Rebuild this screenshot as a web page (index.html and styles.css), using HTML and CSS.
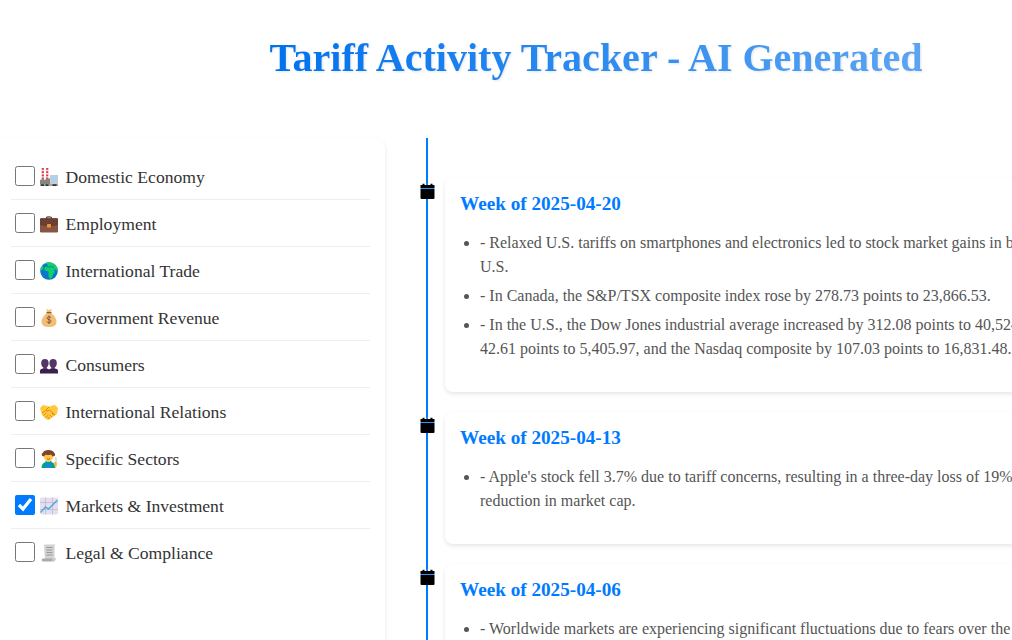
FILE: index.html
```html
<!DOCTYPE html>
<html lang="en">
<head>
<meta charset="utf-8">
<title>Tariff Activity Tracker</title>
<link rel="stylesheet" href="styles.css">
</head>
<body>
<div class="viewport">
<div class="page">
  <header class="header"><h1 class="title">Tariff Activity Tracker - AI Generated</h1></header>
  <main class="columns">
    <aside class="sidebar">
      <label class="row"><input class="check" type="checkbox">
        <svg class="icon" viewBox="0 0 18 18"><path d="M2.800 0v11M7.200 0v11" stroke="#f3dede" stroke-width="2.200"/><path d="M2.800 0v11M7.200 0v11" stroke="#e5394b" stroke-width="2.200" stroke-dasharray="1.800 1.400"/><path d="M10 7h8v11h-8z" fill="#c5ccd3"/><path d="M11.500 8h5v5h-5z" fill="#a9d3f3"/><path d="M0 12l4-1.500V12l4-1.500h2V18H0z" fill="#858585"/><path d="M0 16h18v2H0z" fill="#a5a5a5"/><path d="M1 16.300h3v1.700H1zm4.500 0h3v1.700h-3zm7 0h4v1.700h-4z" fill="#333"/></svg>
        <span>Domestic Economy</span></label>
      <label class="row"><input class="check" type="checkbox">
        <svg class="icon" viewBox="0 0 18 18"><path d="M6.500 4V2.800q0-1 2.500-1t2.500 1V4" fill="none" stroke="#5b3a33" stroke-width="1.200"/><rect y="3.300" width="18" height="14.200" rx="1.300" fill="#8a5442"/><path d="M0 4.500q0-1.200 1.200-1.200h15.600q1.200 0 1.200 1.200V10q-9 2.500-18 0z" fill="#6a4033"/><rect x="7" y="9" width="4" height="3.500" rx="1" fill="#eb963c"/></svg>
        <span>Employment</span></label>
      <label class="row"><input class="check" type="checkbox">
        <svg class="icon" viewBox="0 0 18 18"><circle cx="9" cy="9" r="8.800" fill="#0878c8"/><path d="M4 1.700Q7-.4 11 .5q4.500 1.200 6.300 5.500l-.8 3-1.500-2-1 1 1 2-2 2-1 3.500-2 1.500-1.500-2.500V9.500L6 9 4 7.500 5 5l3-1.500-1-1.500zM.7 6L3 3.500 3.500 6 1.500 9z" fill="#13cf68"/><path d="M6 4.500l3 .5 3-.5 2 1.500" fill="none" stroke="#0878c8" stroke-width=".9"/></svg>
        <span>International Trade</span></label>
      <label class="row"><input class="check" type="checkbox">
        <svg class="icon" viewBox="0 0 18 18"><path d="M6 0l3 1 3-1-1.500 4h-3z" fill="#f7c477"/><path d="M7 4h4q5.500 4 5.500 9 0 5-7.500 5t-7.500-5Q1.500 8 7 4z" fill="#f3bd76"/><path d="M6.500 3.600h5" stroke="#8b5d39" stroke-width="1.300"/><path d="M11 9q-.5-1.300-2.200-1.200-1.800.1-1.700 1.500.1 1.100 2 1.400 2 .3 1.900 1.700-.1 1.300-2 1.300-1.700 0-2.200-1.300M9 6.500V15" fill="none" stroke="#70492e" stroke-width=".8"/></svg>
        <span>Government Revenue</span></label>
      <label class="row"><input class="check" type="checkbox">
        <svg class="icon" viewBox="0 0 18 18"><path d="M0 17.500v-2.500q0-2.200 3.500-2.600V10.500h3v1.900q1.500.2 2.500 1 1-.8 2.500-1v-1.900h3v1.900q3.500.4 3.500 2.600v2.500z" fill="#3b204b"/><ellipse cx="4.900" cy="7.200" rx="3.700" ry="4.200" fill="#533566"/><ellipse cx="13.100" cy="7.200" rx="3.700" ry="4.200" fill="#533566"/><path d="M3.500 10h3v3h-3zM11.500 10h3v3h-3z" fill="#533566"/></svg>
        <span>Consumers</span></label>
      <label class="row"><input class="check" type="checkbox">
        <svg class="icon" viewBox="0 0 18 18"><path d="M0 5l3-3 6 1.500L15 2l3 3-1 6-3 2-5 4-3-1-4-4z" fill="#ffc83d"/><path d="M9 4L5.500 7.500Q7 9 9.500 7L15 12M2 10l3-2M3.500 12.500L6.500 10M5.500 14.500L8.500 12M7.500 16l2.500-2M10 12l2 2M12 10l2 2.500" fill="none" stroke="#d67d00" stroke-width=".8"/></svg>
        <span>International Relations</span></label>
      <label class="row"><input class="check" type="checkbox">
        <svg class="icon" viewBox="0 0 18 18"><path d="M1.500 18q0-6.500 7-6.500t7 6.500z" fill="#00a86b"/><circle cx="8.500" cy="6.800" r="4.500" fill="#ffc83d"/><path d="M2.300 6Q.8 4.300 3 2.500 4 0 8.500 0t5.500 2.500Q16 4.300 14.700 6l-2 .5-1.700-2q-3 1-5.500 0L4 6.500z" fill="#7b4530"/><path d="M5.500 11h1.200v2.500h3.600V11h1.200v3l1.500 4H4l1.500-4z" fill="#168cd8"/><path d="M7 8.700q1.500 1 3 0" fill="none" stroke="#a95216" stroke-width=".8"/><path d="M15.800 7v5" stroke="#dcdce2" stroke-width="2"/><path d="M15.500 12v4.500" stroke="#f5b335" stroke-width="2.500"/></svg>
        <span>Specific Sectors</span></label>
      <label class="row"><input class="check" type="checkbox" checked>
        <svg class="icon" viewBox="0 0 18 18"><rect y=".5" width="18" height="17" rx="1.700" fill="#e5dfed"/><path d="M0 5.500h18M0 12.500h18M5.500.5v17M12.500.5v17" stroke="#c2b9cc" stroke-width=".8"/><path d="M.5 15.500L5.500 10l3 2L17.500 3" fill="none" stroke="#48a9e8" stroke-width="1.400"/></svg>
        <span>Markets &amp; Investment</span></label>
      <label class="row"><input class="check" type="checkbox">
        <svg class="icon" viewBox="0 0 18 18"><path d="M4 1.500q0-1 1.500-1h10L14.500 2v14H5z" fill="#d2d2d2"/><path d="M6.500 3.500h6M6.500 6h6M6.500 8.500h6M6.500 11h6" stroke="#999" stroke-width="1.100"/><path d="M2.500 14.500h10v3h-10q-1.800-1.500 0-3z" fill="#aaa"/><path d="M12.500 17q2.500 0 2.500-3" fill="none" stroke="#c5c5c5" stroke-width="1.500"/></svg>
        <span>Legal &amp; Compliance</span></label>
    </aside>
    <section class="timeline">
      <article class="card">
        <svg class="marker" viewBox="0 0 15 16"><path d="M.5 2h2V.8h2V2h6V.8h2V2h2v3H.5z"/><path d="M.5 6h14v9q0 1-1 1h-12q-1 0-1-1z"/><path class="seam" d="M.5 5.500h14M7 0v2"/></svg>
        <h2 class="week">Week of 2025-04-20</h2>
        <ul class="notes">
          <li>- Relaxed U.S. tariffs on smartphones and electronics led to stock market gains in both<br>U.S.</li>
          <li>- In Canada, the S&amp;P/TSX composite index rose by 278.73 points to 23,866.53.</li>
          <li>- In the U.S., the Dow Jones industrial average increased by 312.08 points to 40,524<br>42.61 points to 5,405.97, and the Nasdaq composite by 107.03 points to 16,831.48.</li>
        </ul>
      </article>
      <article class="card">
        <svg class="marker" viewBox="0 0 15 16"><path d="M.5 2h2V.8h2V2h6V.8h2V2h2v3H.5z"/><path d="M.5 6h14v9q0 1-1 1h-12q-1 0-1-1z"/><path class="seam" d="M.5 5.500h14M7 0v2"/></svg>
        <h2 class="week">Week of 2025-04-13</h2>
        <ul class="notes">
          <li>- Apple's stock fell 3.7% due to tariff concerns, resulting in a three-day loss of 19%<br>reduction in market cap.</li>
        </ul>
      </article>
      <article class="card">
        <svg class="marker" viewBox="0 0 15 16"><path d="M.5 2h2V.8h2V2h6V.8h2V2h2v3H.5z"/><path d="M.5 6h14v9q0 1-1 1h-12q-1 0-1-1z"/><path class="seam" d="M.5 5.500h14M7 0v2"/></svg>
        <h2 class="week">Week of 2025-04-06</h2>
        <ul class="notes">
          <li>- Worldwide markets are experiencing significant fluctuations due to fears over the</li>
        </ul>
      </article>
    </section>
  </main>
</div>
</div>
</body>
</html>
```
FILE: styles.css
```css
* { box-sizing: border-box; }
body { margin: 0; background: #fff; color: #333; font-family: "Liberation Serif", "Times New Roman", serif; }
.viewport { width: 100%; height: 640px; overflow: hidden; }
.page { width: 1192px; height: 640px; }
.header { height: 138px; padding-top: 35px; text-align: center; }
.title { display: inline-block; margin: 0; font-size: 40px; line-height: 46px; white-space: nowrap; color: transparent; background: linear-gradient(90deg, #0072ef, #5ba4f2); background-clip: text; -webkit-background-clip: text; filter: drop-shadow(1px 1px 1px rgba(0, 0, 0, .1)); }
.columns { display: flex; gap: 41px; height: 502px; }
.sidebar { flex: none; width: 385px; padding: 15px 15px 15px 11px; border-radius: 0 10px 0 0; box-shadow: 0 2px 4px rgba(0, 0, 0, .1); }
.row { display: flex; align-items: center; height: 47px; padding-left: 3.500px; border-bottom: 1px solid #eee; font-size: 17.600px; }
.row:last-child { border-bottom-color: transparent; }
.check { flex: none; width: 20px; height: 20px; margin: 0 5px 0 0; accent-color: #007bff; }
.icon { flex: none; width: 18px; height: 18px; margin: 2px 8px 0 0; }
.row span { padding-top: 2px; }
.timeline { flex: 1; padding: 40px 0 0 17px; border-left: 2px solid #007bff; }
.card { position: relative; margin-bottom: 20px; padding: 15px; border-radius: 8px; background: #fff; box-shadow: 0 2px 4px rgba(0, 0, 0, .1); }
.marker { position: absolute; left: -25px; top: 5px; width: 15px; height: 16px; }
.seam { fill: none; stroke: #3295ff; stroke-width: 1; }
.week { margin: 0 0 16px; color: #007bff; font-size: 19.200px; line-height: 22px; }
.notes { margin: 0 0 16px; padding-left: 20px; color: #555; font-size: 16px; line-height: 24px; white-space: nowrap; }
.notes li + li { margin-top: 5px; }
```
